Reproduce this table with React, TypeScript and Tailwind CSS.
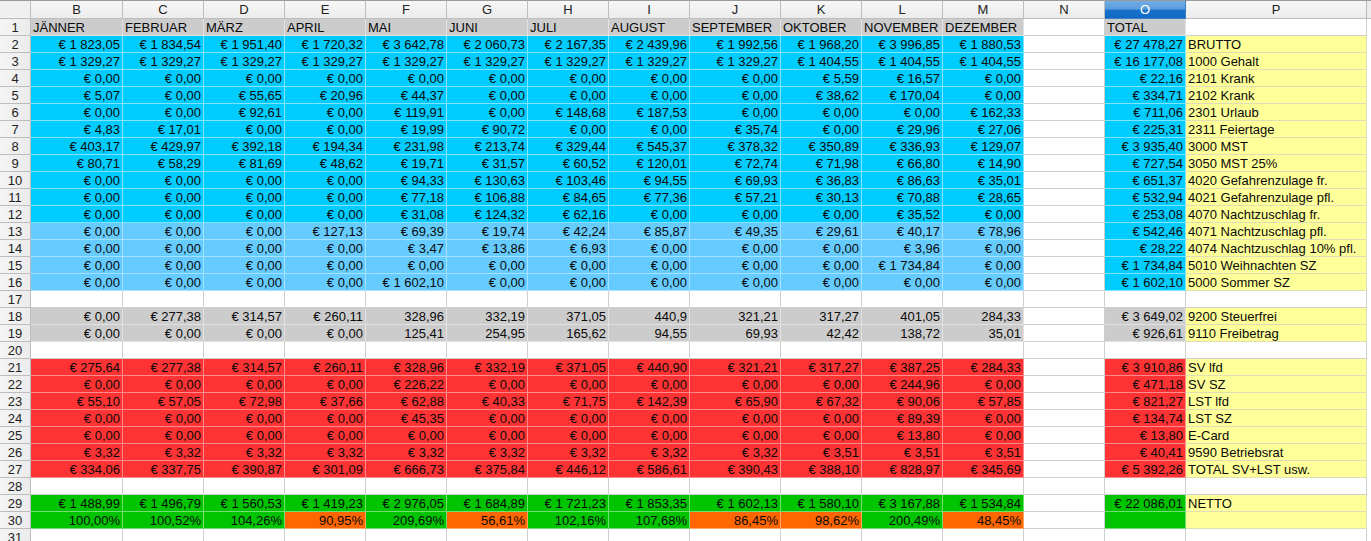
import React from "react";

type Kind = "head" | "blue" | "lblue" | "grey" | "red" | "green" | "pct" | "empty";

type Row = { n: number; kind: Kind; v?: string[]; o?: string; p?: string };

const z = "€ 0,00";
const rep = (s: string, k: number) => Array.from({ length: k }, () => s);

const rows: Row[] = [
  {
    n: 1,
    kind: "head",
    v: ["JÄNNER", "FEBRUAR", "MÄRZ", "APRIL", "MAI", "JUNI", "JULI", "AUGUST", "SEPTEMBER", "OKTOBER", "NOVEMBER", "DEZEMBER"],
    o: "TOTAL",
    p: "",
  },
  {
    n: 2,
    kind: "blue",
    v: ["€ 1 823,05", "€ 1 834,54", "€ 1 951,40", "€ 1 720,32", "€ 3 642,78", "€ 2 060,73", "€ 2 167,35", "€ 2 439,96", "€ 1 992,56", "€ 1 968,20", "€ 3 996,85", "€ 1 880,53"],
    o: "€ 27 478,27",
    p: "BRUTTO",
  },
  {
    n: 3,
    kind: "blue",
    v: [...rep("€ 1 329,27", 9), "€ 1 404,55", "€ 1 404,55", "€ 1 404,55"],
    o: "€ 16 177,08",
    p: "1000 Gehalt",
  },
  { n: 4, kind: "blue", v: [...rep(z, 9), "€ 5,59", "€ 16,57", z], o: "€ 22,16", p: "2101 Krank" },
  {
    n: 5,
    kind: "blue",
    v: ["€ 5,07", z, "€ 55,65", "€ 20,96", "€ 44,37", z, z, z, z, "€ 38,62", "€ 170,04", z],
    o: "€ 334,71",
    p: "2102 Krank",
  },
  {
    n: 6,
    kind: "blue",
    v: [z, z, "€ 92,61", z, "€ 119,91", z, "€ 148,68", "€ 187,53", z, z, z, "€ 162,33"],
    o: "€ 711,06",
    p: "2301 Urlaub",
  },
  {
    n: 7,
    kind: "blue",
    v: ["€ 4,83", "€ 17,01", z, z, "€ 19,99", "€ 90,72", z, z, "€ 35,74", z, "€ 29,96", "€ 27,06"],
    o: "€ 225,31",
    p: "2311 Feiertage",
  },
  {
    n: 8,
    kind: "blue",
    v: ["€ 403,17", "€ 429,97", "€ 392,18", "€ 194,34", "€ 231,98", "€ 213,74", "€ 329,44", "€ 545,37", "€ 378,32", "€ 350,89", "€ 336,93", "€ 129,07"],
    o: "€ 3 935,40",
    p: "3000 MST",
  },
  {
    n: 9,
    kind: "blue",
    v: ["€ 80,71", "€ 58,29", "€ 81,69", "€ 48,62", "€ 19,71", "€ 31,57", "€ 60,52", "€ 120,01", "€ 72,74", "€ 71,98", "€ 66,80", "€ 14,90"],
    o: "€ 727,54",
    p: "3050 MST 25%",
  },
  {
    n: 10,
    kind: "blue",
    v: [z, z, z, z, "€ 94,33", "€ 130,63", "€ 103,46", "€ 94,55", "€ 69,93", "€ 36,83", "€ 86,63", "€ 35,01"],
    o: "€ 651,37",
    p: "4020 Gefahrenzulage fr.",
  },
  {
    n: 11,
    kind: "blue",
    v: [z, z, z, z, "€ 77,18", "€ 106,88", "€ 84,65", "€ 77,36", "€ 57,21", "€ 30,13", "€ 70,88", "€ 28,65"],
    o: "€ 532,94",
    p: "4021 Gefahrenzulage pfl.",
  },
  {
    n: 12,
    kind: "blue",
    v: [z, z, z, z, "€ 31,08", "€ 124,32", "€ 62,16", z, z, z, "€ 35,52", z],
    o: "€ 253,08",
    p: "4070 Nachtzuschlag fr.",
  },
  {
    n: 13,
    kind: "lblue",
    v: [z, z, z, "€ 127,13", "€ 69,39", "€ 19,74", "€ 42,24", "€ 85,87", "€ 49,35", "€ 29,61", "€ 40,17", "€ 78,96"],
    o: "€ 542,46",
    p: "4071 Nachtzuschlag pfl.",
  },
  {
    n: 14,
    kind: "lblue",
    v: [z, z, z, z, "€ 3,47", "€ 13,86", "€ 6,93", z, z, z, "€ 3,96", z],
    o: "€ 28,22",
    p: "4074 Nachtzuschlag 10% pfl.",
  },
  {
    n: 15,
    kind: "lblue",
    v: [...rep(z, 10), "€ 1 734,84", z],
    o: "€ 1 734,84",
    p: "5010 Weihnachten SZ",
  },
  {
    n: 16,
    kind: "lblue",
    v: [z, z, z, z, "€ 1 602,10", ...rep(z, 7)],
    o: "€ 1 602,10",
    p: "5000 Sommer SZ",
  },
  { n: 17, kind: "empty" },
  {
    n: 18,
    kind: "grey",
    v: [z, "€ 277,38", "€ 314,57", "€ 260,11", "328,96", "332,19", "371,05", "440,9", "321,21", "317,27", "401,05", "284,33"],
    o: "€ 3 649,02",
    p: "9200 Steuerfrei",
  },
  {
    n: 19,
    kind: "grey",
    v: [z, z, z, z, "125,41", "254,95", "165,62", "94,55", "69,93", "42,42", "138,72", "35,01"],
    o: "€ 926,61",
    p: "9110 Freibetrag",
  },
  { n: 20, kind: "empty" },
  {
    n: 21,
    kind: "red",
    v: ["€ 275,64", "€ 277,38", "€ 314,57", "€ 260,11", "€ 328,96", "€ 332,19", "€ 371,05", "€ 440,90", "€ 321,21", "€ 317,27", "€ 387,25", "€ 284,33"],
    o: "€ 3 910,86",
    p: "SV lfd",
  },
  {
    n: 22,
    kind: "red",
    v: [z, z, z, z, "€ 226,22", z, z, z, z, z, "€ 244,96", z],
    o: "€ 471,18",
    p: "SV SZ",
  },
  {
    n: 23,
    kind: "red",
    v: ["€ 55,10", "€ 57,05", "€ 72,98", "€ 37,66", "€ 62,88", "€ 40,33", "€ 71,75", "€ 142,39", "€ 65,90", "€ 67,32", "€ 90,06", "€ 57,85"],
    o: "€ 821,27",
    p: "LST lfd",
  },
  {
    n: 24,
    kind: "red",
    v: [z, z, z, z, "€ 45,35", z, z, z, z, z, "€ 89,39", z],
    o: "€ 134,74",
    p: "LST SZ",
  },
  { n: 25, kind: "red", v: [...rep(z, 10), "€ 13,80", z], o: "€ 13,80", p: "E-Card" },
  {
    n: 26,
    kind: "red",
    v: [...rep("€ 3,32", 9), "€ 3,51", "€ 3,51", "€ 3,51"],
    o: "€ 40,41",
    p: "9590 Betriebsrat",
  },
  {
    n: 27,
    kind: "red",
    v: ["€ 334,06", "€ 337,75", "€ 390,87", "€ 301,09", "€ 666,73", "€ 375,84", "€ 446,12", "€ 586,61", "€ 390,43", "€ 388,10", "€ 828,97", "€ 345,69"],
    o: "€ 5 392,26",
    p: "TOTAL SV+LST usw.",
  },
  { n: 28, kind: "empty" },
  {
    n: 29,
    kind: "green",
    v: ["€ 1 488,99", "€ 1 496,79", "€ 1 560,53", "€ 1 419,23", "€ 2 976,05", "€ 1 684,89", "€ 1 721,23", "€ 1 853,35", "€ 1 602,13", "€ 1 580,10", "€ 3 167,88", "€ 1 534,84"],
    o: "€ 22 086,01",
    p: "NETTO",
  },
  {
    n: 30,
    kind: "pct",
    v: ["100,00%", "100,52%", "104,26%", "90,95%", "209,69%", "56,61%", "102,16%", "107,68%", "86,45%", "98,62%", "200,49%", "48,45%"],
    o: "",
    p: "",
  },
  { n: 31, kind: "empty" },
];

const BG: Record<string, string> = {
  white: "bg-white border-[#cfcfcf]",
  grey: "bg-[#cccccc] border-[#e2e2e2]",
  blue: "bg-[#00ccff] border-[#80e4ff]",
  lblue: "bg-[#66ccff] border-[#a6e2ff]",
  red: "bg-[#ff3333] border-[#ff8c8c]",
  green: "bg-[#00c400] border-[#73dc73]",
  orange: "bg-[#ff6600] border-[#ffa366]",
  yellow: "bg-[#ffff99] border-[#dedeb8]",
};

const COLS = ["B", "C", "D", "E", "F", "G", "H", "I", "J", "K", "L", "M", "N", "O", "P"];

function pctVal(s: string) {
  return parseFloat(s.replace("%", "").replace(",", "."));
}

function mainColor(kind: Kind, v: string): string {
  switch (kind) {
    case "head":
      return "grey";
    case "blue":
      return "blue";
    case "lblue":
      return "lblue";
    case "grey":
      return "grey";
    case "red":
      return "red";
    case "green":
      return "green";
    case "pct":
      return pctVal(v) < 100 ? "orange" : "green";
    default:
      return "white";
  }
}

function oColor(kind: Kind): string {
  switch (kind) {
    case "head":
      return "grey";
    case "blue":
    case "lblue":
      return "blue";
    case "grey":
      return "grey";
    case "red":
      return "red";
    case "green":
    case "pct":
      return "green";
    default:
      return "white";
  }
}

function pColor(kind: Kind): string {
  if (kind === "head" || kind === "empty") return "white";
  return "yellow";
}

const cellBase =
  "h-[17px] border-r border-b overflow-hidden whitespace-nowrap text-[13px] leading-[18px] text-[#0a0a0a]";

function Cell({ color, text, left }: { color: string; text?: string; left?: boolean }) {
  return (
    <div className={`${cellBase} ${BG[color]} ${left ? "text-left pl-[2px]" : "text-right pr-[2px]"}`}>
      {text}
    </div>
  );
}

export default function App() {
  return (
    <div
      className="w-[1371px] h-[541px] overflow-hidden bg-white"
      style={{ fontFamily: '"Liberation Sans", Arial, sans-serif' }}
    >
      <div className="grid grid-cols-[31px_92px_81px_81px_81px_81px_81px_81px_81px_91px_81px_81px_81px_81px_81px_181px_1fr]">
        {/* header row */}
        <div className="h-[19px] bg-[#f0f0f0] border-t border-t-[#9a9a9a] border-r border-b border-[#bdbdbd]" />
        {COLS.map((c) =>
          c === "O" ? (
            <div
              key={c}
              className="h-[19px] border-t border-t-[#9a9a9a] border-r border-b border-[#3b7fc4] bg-[linear-gradient(to_bottom,#72ade6_0%,#5b9ddd_48%,#1a72cc_52%,#0f69c5_100%)] text-white text-[13px] leading-[17px] text-center"
            >
              {c}
            </div>
          ) : (
            <div
              key={c}
              className="h-[19px] border-t border-t-[#9a9a9a] border-r border-b border-[#bdbdbd] bg-[linear-gradient(to_bottom,#f7f7f7,#ececec)] text-[#222] text-[13px] leading-[17px] text-center"
            >
              {c}
            </div>
          )
        )}
        <div className="h-[19px] border-t border-t-[#9a9a9a] border-b border-[#bdbdbd] bg-[#ececec]" />

        {rows.map((r) => (
          <React.Fragment key={r.n}>
            <div className="h-[17px] border-r border-b border-[#bdbdbd] bg-[linear-gradient(to_right,#f5f5f5,#ebebeb)] text-[13px] leading-[18px] text-center text-[#222]">
              {r.n}
            </div>
            {Array.from({ length: 12 }, (_, i) => {
              const v = r.v ? r.v[i] : "";
              return <Cell key={i} color={mainColor(r.kind, v)} text={v} left={r.kind === "head"} />;
            })}
            <Cell color="white" />
            <Cell color={oColor(r.kind)} text={r.o} left={r.kind === "head"} />
            <Cell color={pColor(r.kind)} text={r.p} left />
            <div className="h-[17px] bg-white" />
          </React.Fragment>
        ))}
      </div>
    </div>
  );
}
